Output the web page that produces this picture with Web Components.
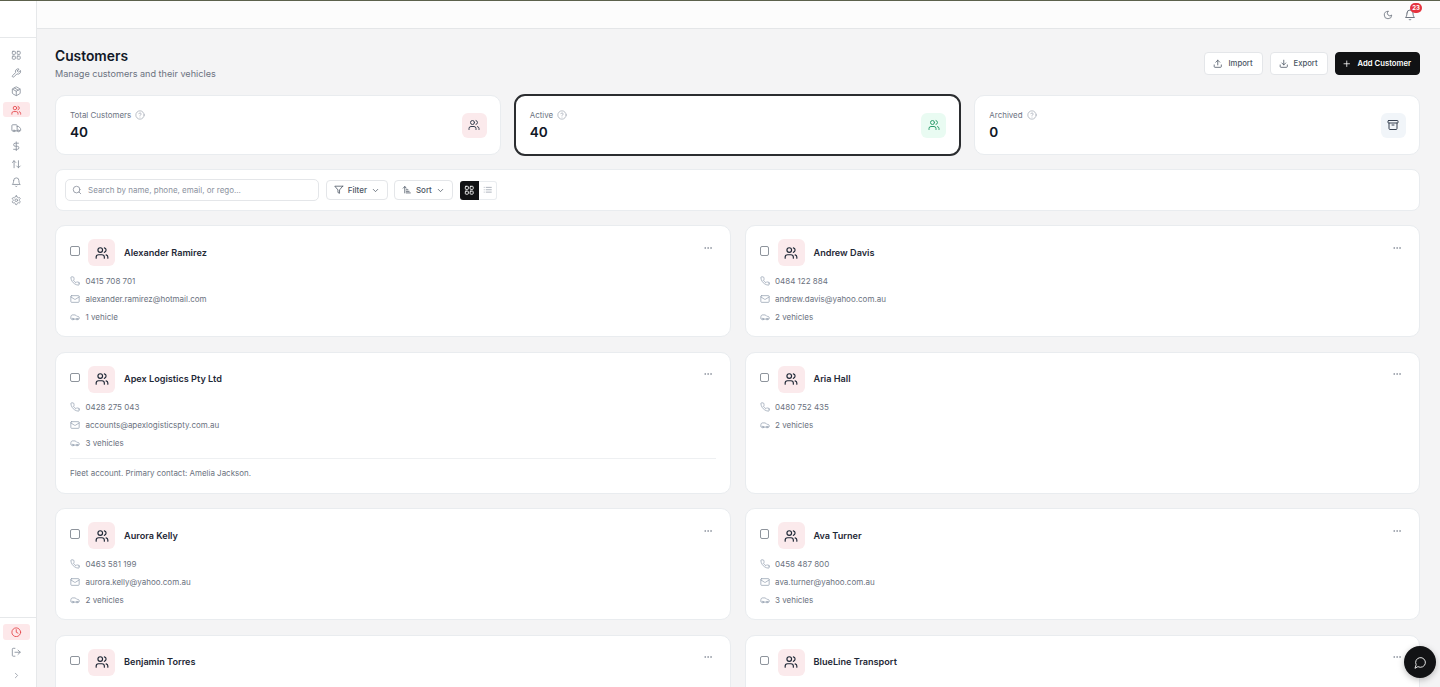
<!DOCTYPE html>
<html lang="en"><head><meta charset="utf-8"><title>Customers</title>
<style>
html,body{margin:0;height:100%;overflow:hidden;background:#f4f4f5;font-family:Inter,"Liberation Sans",sans-serif;-webkit-font-smoothing:antialiased}
</style></head><body>
<app-shell>
  <side-nav slot="side"></side-nav>
  <top-bar slot="top"></top-bar>
  <page-header></page-header>
  <stat-row>
    <stat-card label="Total Customers" value="40" icon="users" tone="rose"></stat-card>
    <stat-card label="Active" value="40" icon="users" tone="green" selected></stat-card>
    <stat-card label="Archived" value="0" icon="archive" tone="slate"></stat-card>
  </stat-row>
  <tool-bar></tool-bar>
  <card-grid>
    <customer-card name="Alexander Ramirez" phone="0415 708 701" email="alexander.ramirez@hotmail.com" vehicles="1 vehicle"></customer-card>
    <customer-card name="Andrew Davis" phone="0484 122 884" email="andrew.davis@yahoo.com.au" vehicles="2 vehicles"></customer-card>
    <customer-card name="Apex Logistics Pty Ltd" phone="0428 275 043" email="accounts@apexlogisticspty.com.au" vehicles="3 vehicles" note="Fleet account. Primary contact: Amelia Jackson."></customer-card>
    <customer-card name="Aria Hall" phone="0480 752 435" vehicles="2 vehicles"></customer-card>
    <customer-card name="Aurora Kelly" phone="0463 581 199" email="aurora.kelly@yahoo.com.au" vehicles="2 vehicles"></customer-card>
    <customer-card name="Ava Turner" phone="0458 487 800" email="ava.turner@yahoo.com.au" vehicles="3 vehicles"></customer-card>
    <customer-card name="Benjamin Torres"></customer-card>
    <customer-card name="BlueLine Transport"></customer-card>
  </card-grid>
</app-shell>
<chat-fab></chat-fab>
<script>
const P={
users:'<path d="M16 21v-2a4 4 0 0 0-4-4H6a4 4 0 0 0-4 4v2"/><circle cx="9" cy="7" r="4"/><path d="M22 21v-2a4 4 0 0 0-3-3.87"/><path d="M16 3.13a4 4 0 0 1 0 7.75"/>',
grid:'<rect x="3" y="3" width="7" height="7" rx="1.5"/><rect x="14" y="3" width="7" height="7" rx="1.5"/><rect x="14" y="14" width="7" height="7" rx="1.5"/><rect x="3" y="14" width="7" height="7" rx="1.5"/>',
wrench:'<path d="M14.7 6.3a1 1 0 0 0 0 1.4l1.6 1.6a1 1 0 0 0 1.4 0l3.77-3.77a6 6 0 0 1-7.94 7.94l-6.91 6.91a2.12 2.12 0 0 1-3-3l6.91-6.91a6 6 0 0 1 7.94-7.94l-3.76 3.76z"/>',
package:'<path d="M11 21.73a2 2 0 0 0 2 0l7-4A2 2 0 0 0 21 16V8a2 2 0 0 0-1-1.73l-7-4a2 2 0 0 0-2 0l-7 4A2 2 0 0 0 3 8v8a2 2 0 0 0 1 1.73z"/><path d="M12 22V12"/><path d="m3.3 7 8.7 5 8.7-5"/><path d="m7.5 4.27 9 5.15"/>',
truck:'<path d="M14 18V6a2 2 0 0 0-2-2H4a2 2 0 0 0-2 2v11a1 1 0 0 0 1 1h2"/><path d="M15 18H9"/><path d="M19 18h2a1 1 0 0 0 1-1v-3.65a1 1 0 0 0-.22-.624l-3.48-4.35A1 1 0 0 0 17.52 8H14"/><circle cx="17" cy="18" r="2"/><circle cx="7" cy="18" r="2"/>',
dollar:'<line x1="12" y1="2" x2="12" y2="22"/><path d="M17 5H9.5a3.5 3.5 0 0 0 0 7h5a3.5 3.5 0 0 1 0 7H6"/>',
updown:'<path d="m21 16-4 4-4-4"/><path d="M17 20V4"/><path d="m3 8 4-4 4 4"/><path d="M7 4v16"/>',
bell:'<path d="M6 8a6 6 0 0 1 12 0c0 7 3 9 3 9H3s3-2 3-9"/><path d="M10.3 21a1.94 1.94 0 0 0 3.4 0"/>',
settings:'<path d="M12.22 2h-.44a2 2 0 0 0-2 2v.18a2 2 0 0 1-1 1.73l-.43.25a2 2 0 0 1-2 0l-.15-.08a2 2 0 0 0-2.73.73l-.22.38a2 2 0 0 0 .73 2.73l.15.1a2 2 0 0 1 1 1.72v.51a2 2 0 0 1-1 1.74l-.15.09a2 2 0 0 0-.73 2.73l.22.38a2 2 0 0 0 2.73.73l.15-.08a2 2 0 0 1 2 0l.43.25a2 2 0 0 1 1 1.73V20a2 2 0 0 0 2 2h.44a2 2 0 0 0 2-2v-.18a2 2 0 0 1 1-1.73l.43-.25a2 2 0 0 1 2 0l.15.08a2 2 0 0 0 2.73-.73l.22-.39a2 2 0 0 0-.73-2.73l-.15-.08a2 2 0 0 1-1-1.74v-.5a2 2 0 0 1 1-1.74l.15-.09a2 2 0 0 0 .73-2.73l-.22-.38a2 2 0 0 0-2.73-.73l-.15.08a2 2 0 0 1-2 0l-.43-.25a2 2 0 0 1-1-1.73V4a2 2 0 0 0-2-2z"/><circle cx="12" cy="12" r="3"/>',
clock:'<circle cx="12" cy="12" r="10"/><polyline points="12 6 12 12 16 14"/>',
logout:'<path d="M9 21H5a2 2 0 0 1-2-2V5a2 2 0 0 1 2-2h4"/><polyline points="16 17 21 12 16 7"/><line x1="21" y1="12" x2="9" y2="12"/>',
right:'<path d="m9 18 6-6-6-6"/>',
down:'<path d="m6 9 6 6 6-6"/>',
moon:'<path d="M12 3a6 6 0 0 0 9 9 9 9 0 1 1-9-9Z"/>',
upload:'<path d="M21 15v4a2 2 0 0 1-2 2H5a2 2 0 0 1-2-2v-4"/><polyline points="17 8 12 3 7 8"/><line x1="12" y1="3" x2="12" y2="15"/>',
download:'<path d="M21 15v4a2 2 0 0 1-2 2H5a2 2 0 0 1-2-2v-4"/><polyline points="7 10 12 15 17 10"/><line x1="12" y1="15" x2="12" y2="3"/>',
plus:'<path d="M5 12h14"/><path d="M12 5v14"/>',
help:'<circle cx="12" cy="12" r="10"/><path d="M9.09 9a3 3 0 0 1 5.83 1c0 2-3 3-3 3"/><path d="M12 17h.01"/>',
archive:'<rect x="2" y="3" width="20" height="5" rx="1"/><path d="M4 8v11a2 2 0 0 0 2 2h12a2 2 0 0 0 2-2V8"/><path d="M10 12h4"/>',
search:'<circle cx="11" cy="11" r="8"/><path d="m21 21-4.3-4.3"/>',
filter:'<polygon points="22 3 2 3 10 12.46 10 19 14 21 14 12.46 22 3"/>',
sort:'<path d="m3 8 4-4 4 4"/><path d="M7 4v16"/><path d="M11 12h4"/><path d="M11 16h7"/><path d="M11 20h10"/>',
list:'<path d="M3 12h.01"/><path d="M3 18h.01"/><path d="M3 6h.01"/><path d="M8 12h13"/><path d="M8 18h13"/><path d="M8 6h13"/>',
phone:'<path d="M22 16.92v3a2 2 0 0 1-2.18 2 19.79 19.79 0 0 1-8.63-3.07 19.5 19.5 0 0 1-6-6 19.79 19.79 0 0 1-3.07-8.67A2 2 0 0 1 4.11 2h3a2 2 0 0 1 2 1.72 12.84 12.84 0 0 0 .7 2.81 2 2 0 0 1-.45 2.11L8.09 9.91a16 16 0 0 0 6 6l1.27-1.27a2 2 0 0 1 2.11-.45 12.84 12.84 0 0 0 2.81.7A2 2 0 0 1 22 16.92z"/>',
mail:'<rect x="2" y="4" width="20" height="16" rx="2"/><path d="m22 7-8.97 5.7a1.94 1.94 0 0 1-2.06 0L2 7"/>',
car:'<path d="M19 17h2c.6 0 1-.4 1-1v-3c0-.9-.7-1.7-1.5-1.9C18.7 10.6 16 10 16 10s-1.3-1.4-2.2-2.3c-.5-.4-1.1-.7-1.8-.7H5c-.6 0-1.1.4-1.4.9l-1.4 2.9A3.7 3.7 0 0 0 2 12v4c0 .6.4 1 1 1h2"/><circle cx="7" cy="17" r="2"/><path d="M9 17h6"/><circle cx="17" cy="17" r="2"/>',
dots:'<circle cx="5" cy="12" r="1"/><circle cx="12" cy="12" r="1"/><circle cx="19" cy="12" r="1"/>',
chat:'<path d="M7.9 20A9 9 0 1 0 4 16.1L2 22Z"/>'
};
function ic(n,s,c,w){return `<svg width="${s}" height="${s}" viewBox="0 0 24 24" fill="none" stroke="${c||'currentColor'}" stroke-width="${w||2}" stroke-linecap="round" stroke-linejoin="round" style="display:block;flex:none">${P[n]}</svg>`}
class Base extends HTMLElement{
  connectedCallback(){ if(!this.shadowRoot){this.attachShadow({mode:'open'}).innerHTML=this.render()} }
  a(n){return this.getAttribute(n)||''}
}
customElements.define('app-shell',class extends Base{render(){return `<style>
:host{display:grid;grid-template-columns:37px 1fr;grid-template-rows:28px 1fr;height:687px;box-sizing:border-box;border-top:1px solid #5c614c;overflow:hidden}
.side{grid-row:1/3;min-height:0;display:flex}
.top{min-width:0;display:flex}
main{min-height:0;overflow:hidden;padding:18px 20px 0 18px;display:flex;flex-direction:column}
</style><div class="side"><slot name="side"></slot></div><div class="top"><slot name="top"></slot></div><main><slot></slot></main>`}});
customElements.define('side-nav',class extends Base{render(){
 const main=['grid','wrench','package','users','truck','dollar','updown','bell','settings'];
 return `<style>
:host{display:flex;flex-direction:column;width:37px;box-sizing:border-box;background:#fff;border-right:1px solid #e6e8ea;color:#8b929e}
.logo{height:36px;border-bottom:1px solid #e6e8ea;flex:none}
nav{flex:1;padding:10px 3px 0 0;display:flex;flex-direction:column;gap:3.1px;align-items:center}
.i{width:27px;height:15px;display:flex;align-items:center;justify-content:center;border-radius:3px}
.on{background:#fde8ea;color:#e5484d}
.bot{height:70px;border-top:1px solid #e6e8ea;flex:none;display:flex;flex-direction:column;align-items:center;padding:6px 3px 0 0;box-sizing:border-box}
.bot .c{height:16px;margin-bottom:5px}
.bot .l{margin-bottom:8px;height:15px}
</style><div class="logo"></div><nav>${main.map(n=>`<div class="i ${n=='users'?'on':''}">${ic(n,10.5)}</div>`).join('')}</nav>
<div class="bot"><div class="i on c">${ic('clock',10.5)}</div><div class="i l">${ic('logout',10.5)}</div><div class="i">${ic('right',9)}</div></div>`}});
customElements.define('top-bar',class extends Base{render(){return `<style>
:host{display:flex;flex:1;box-sizing:border-box;height:28px;background:#fcfcfc;border-bottom:1px solid #e4e6e8;align-items:center;justify-content:flex-end;padding:0 24px 0 0;color:#6f7681}
.b{position:relative;margin-left:11px}
.badge{position:absolute;right:-6px;top:-6px;min-width:12px;height:10px;border-radius:6px;background:#e5343f;color:#fff;font:700 6px/10px Inter,sans-serif;text-align:center}
</style>${ic('moon',10)}<div class="b">${ic('bell',12)}<span class="badge">23</span></div>`}});
customElements.define('page-header',class extends Base{render(){
 const btn=(i,t)=>`<button>${ic(i,9.5)}<span>${t}</span></button>`;
 return `<style>
:host{display:flex;justify-content:space-between;align-items:flex-start;height:48px;flex:none}
h1{margin:0;font:600 13.8px/18px Inter,sans-serif;color:#111827}
p{margin:2px 0 0;font:400 9.1px/14px Inter,sans-serif;color:#6b7280}
.acts{display:flex;gap:7px;padding-top:5px}
button{display:flex;align-items:center;gap:5.5px;height:23px;box-sizing:border-box;padding:0 9px 0 8px;border:1px solid #e4e6e9;background:#fff;border-radius:4px;font:500 7.7px Inter,sans-serif;color:#4b5563}
.p{background:#111214;border-color:#111214;color:#fff;font-weight:600;gap:6.5px;padding:0 8px 0 6px}
</style><div class="head"><h1>Customers</h1><p>Manage customers and their vehicles</p></div>
<div class="acts">${btn('upload','Import')}${btn('download','Export')}<button class="p">${ic('plus',9.5)}<span>Add Customer</span></button></div>`}});
customElements.define('stat-row',class extends Base{render(){return `<style>:host{display:grid;grid-template-columns:repeat(3,1fr);gap:14px;flex:none;height:60px;margin-bottom:14px}</style><slot></slot>`}});
customElements.define('stat-card',class extends Base{render(){
 const t={rose:['#fbeaec','#374151'],green:['#e9fbf2','#2f9e6e'],slate:['#f1f5f9','#374151']}[this.a('tone')];
 return `<style>
:host{display:flex;align-items:center;justify-content:space-between;box-sizing:border-box;background:#fff;border:1px solid #e9ecef;border-radius:10px;padding:0 13px 0 14px}
:host([selected]){border:2px solid #2b2d30;margin:-1px;border-radius:11px;padding:0 13px 0 14px}
.l{display:flex;align-items:center;gap:4px;font:400 7.95px/12px Inter,sans-serif;color:#6b7280}
.v{font:600 13.6px/18px Inter,sans-serif;color:#111827;margin-top:2px}
.h{width:10px;height:10px;color:#9aa1ad}
.box{width:25px;height:25px;border-radius:6px;display:flex;align-items:center;justify-content:center;background:${t[0]};color:${t[1]}}
</style><div><div class="l">${this.a('label')}<span class="h">${ic('help',10,null,1.6)}</span></div><div class="v">${this.a('value')}</div></div><div class="box">${ic(this.a('icon'),12)}</div>`}});
customElements.define('tool-bar',class extends Base{render(){
 return `<style>
:host{display:flex;align-items:center;flex:none;box-sizing:border-box;height:42px;background:#fff;border:1px solid #e9ecef;border-radius:8px;padding:0 9px;margin-bottom:14px}
.s{width:254px;height:22px;box-sizing:border-box;border:1px solid #e4e6e9;border-radius:5px;display:flex;align-items:center;gap:6px;padding:0 6px;color:#8b929e;font:400 8px Inter,sans-serif;margin-right:7px}
.b{height:20px;box-sizing:border-box;border:1px solid #e4e6e9;border-radius:4px;display:flex;align-items:center;padding:0 7.2px;gap:4px;color:#4b5563;font:500 8px Inter,sans-serif;margin-right:6px}
.t{display:flex;margin-left:1px;height:19px}
.t div{width:18.5px;display:flex;align-items:center;justify-content:center;box-sizing:border-box}
.a{background:#111214;color:#fff;border-radius:3px 0 0 3px}
.o{border:1px solid #e9ecef;border-left:0;border-radius:0 3px 3px 0;color:#9aa1ad}
</style><div class="s">${ic('search',10)}<span>Search by name, phone, email, or rego...</span></div>
<div class="b">${ic('filter',9.5)}<span>Filter</span>${ic('down',9)}</div>
<div class="b">${ic('sort',9.5)}<span>Sort</span>${ic('down',9)}</div>
<div class="t"><div class="a">${ic('grid',10.5)}</div><div class="o">${ic('list',9.5)}</div></div>`}});
customElements.define('card-grid',class extends Base{render(){return `<style>:host{display:grid;grid-template-columns:repeat(2,1fr);gap:14.5px 14px;flex:none}</style><slot></slot>`}});
customElements.define('customer-card',class extends Base{render(){
 const row=(i,t)=>t?`<div class="r">${ic(i,10,'#94a0b0',1.8)}<span>${t}</span></div>`:'';
 const rows=row('phone',this.a('phone'))+row('mail',this.a('email'))+row('car',this.a('vehicles'));
 return `<style>
:host{display:block;position:relative;box-sizing:border-box;background:#fff;border:1px solid #e9ecef;border-radius:10px;padding:13px 14px 10.5px;min-height:112px}
.h{display:flex;align-items:center;height:27px;margin-bottom:5.5px}
.c{width:9.5px;height:9.5px;box-sizing:border-box;border:1px solid #8e949c;border-radius:2px;margin:-3px 8.5px 0 0;flex:none}
.av{width:27px;height:27px;border-radius:6px;background:#fbeaec;display:flex;align-items:center;justify-content:center;color:#1f2937;margin-right:9px}
.n{font:600 9.15px/14px Inter,sans-serif;color:#1f2937}
.m{position:absolute;right:17px;top:16.5px;color:#8a919c}
.r{display:flex;align-items:center;gap:5.5px;height:18px;font:400 8px/18px Inter,sans-serif;color:#6b7280}
.note{margin-top:6px;padding-top:5px;border-top:1px solid #eef0f2;font:400 7.95px/18px Inter,sans-serif;color:#6b7280}
</style><div class="h"><div class="c"></div><div class="av">${ic('users',14)}</div><div class="n">${this.a('name')}</div></div>
<div class="m">${ic('dots',10)}</div>${rows}${this.a('note')?`<div class="note">${this.a('note')}</div>`:''}`}});
customElements.define('chat-fab',class extends Base{render(){return `<style>
:host{position:fixed;left:1404px;top:646px;width:32px;height:32px;border-radius:50%;background:#121315;color:#e8e8e8;display:flex;align-items:center;justify-content:center;box-shadow:0 2px 6px rgba(0,0,0,.25)}
</style>${ic('chat',13,null,1.8)}`}});
</script>
</body></html>
